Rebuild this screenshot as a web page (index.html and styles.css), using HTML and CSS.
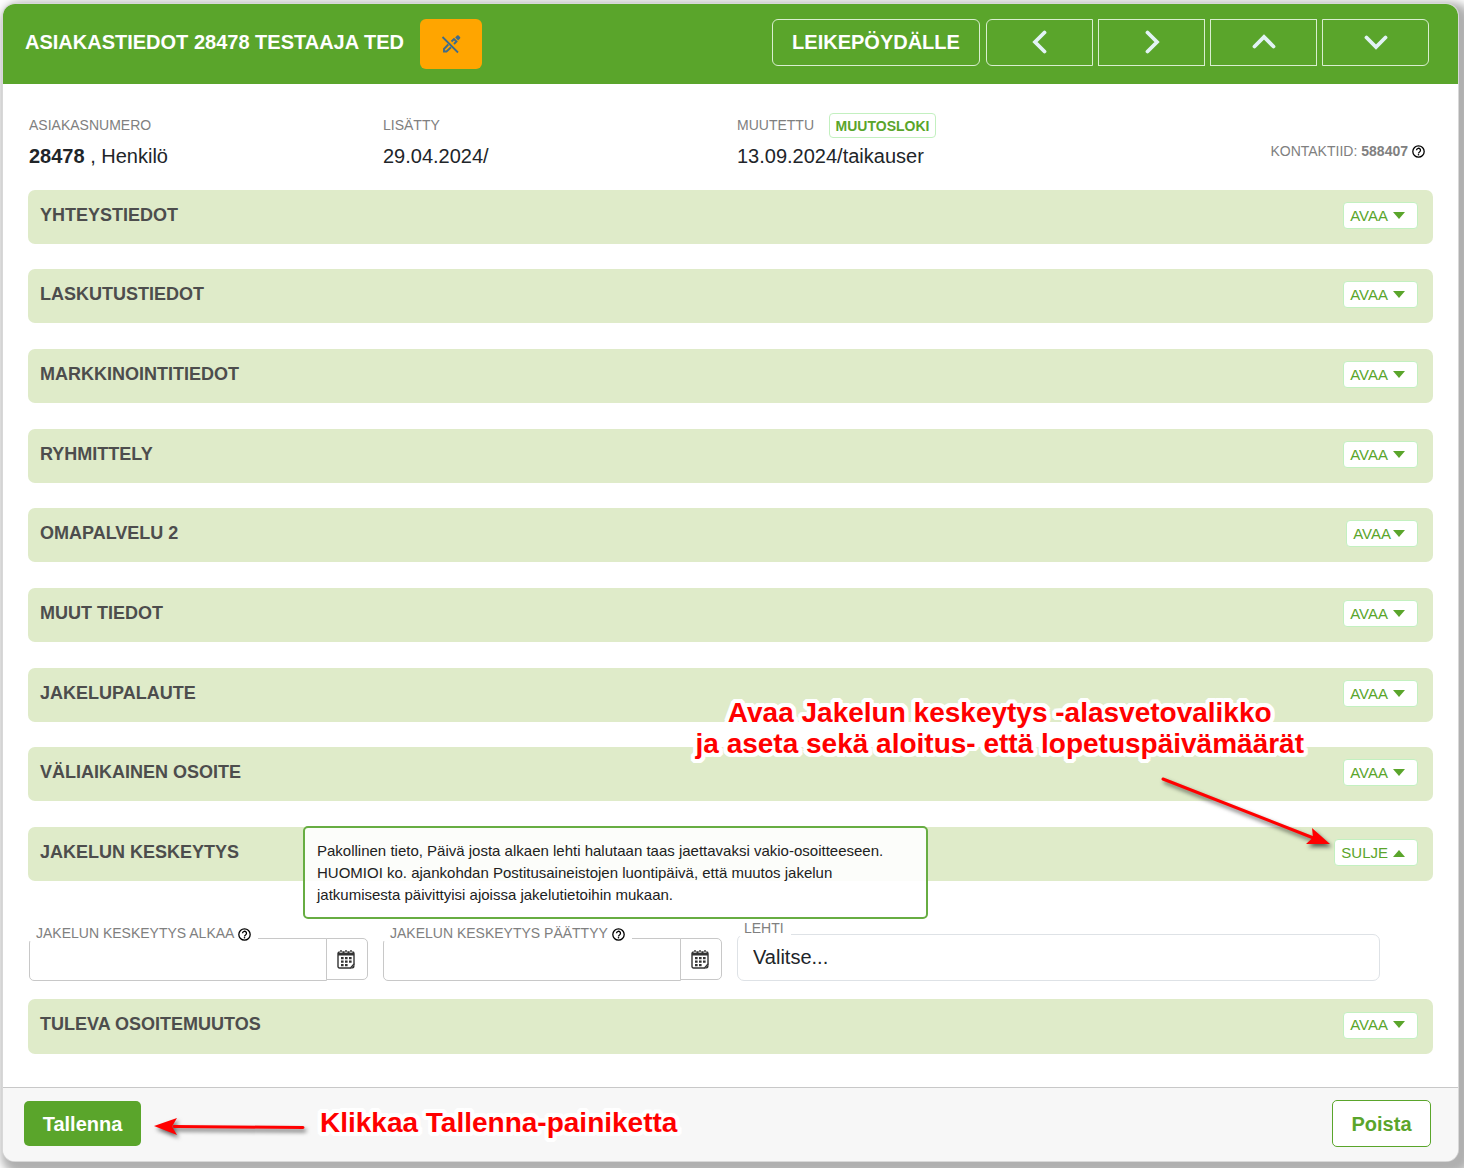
FILE: index.html
```html
<!DOCTYPE html>
<html lang="fi">
<head>
<meta charset="utf-8">
<meta name="viewport" content="width=device-width, initial-scale=1">
<title>Asiakastiedot 28478 Testaaja Ted</title>
<link rel="stylesheet" href="styles.css">
</head>
<body>
<svg class="defs" aria-hidden="true">
  <symbol id="chevron" viewBox="0 0 24 24"><path d="M2.500 16.500 12 7l9.500 9.500" fill="none" stroke="currentColor" stroke-width="3.800" stroke-linecap="round"/></symbol>
  <symbol id="caret" viewBox="0 0 12 8"><path d="M0 0h12L6 7z" fill="currentColor"/></symbol>
  <symbol id="help" viewBox="0 0 24 24"><circle cx="12" cy="12" r="10.500" fill="none" stroke="currentColor" stroke-width="2.400"/><path d="M8.300 9.800a3.700 3.700 0 1 1 5.600 3.100c-1.300.8-1.900 1.300-1.900 2.600" fill="none" stroke="currentColor" stroke-width="2.400"/><circle cx="12" cy="18" r="1.500" fill="currentColor"/></symbol>
  <symbol id="calendar" viewBox="0 0 18 20"><path d="M2.500 3h13A1.500 1.500 0 0 1 17 4.500V15l-3.500 4h-11A1.500 1.500 0 0 1 1 17.500v-13A1.500 1.500 0 0 1 2.500 3z" fill="none" stroke="currentColor" stroke-width="1.400"/><path d="M1 3h16v3.500H1zM17.500 14v3.500a2 2 0 0 1-2 2H12c3 0 4.500-2 5.500-5.500z" fill="currentColor"/><path d="M4 1v3M9 1v3M14 1v3" stroke="#fff" stroke-width="2.600"/><path d="M4 1v2.500M9 1v2.500M14 1v2.500" stroke="currentColor" stroke-width="1.400"/><path d="M8 8h2.600v2.200H8zM12 8h2.600v2.200H12zM4 8h2.600v2.200H4zM4 11.500h2.600v2.200H4zM8 11.500h2.600v2.200H8zM12 11.500h2.600v2.200H12zM4 15h2.600v2.200H4zM8 15h2.600v2.200H8z" fill="currentColor"/></symbol>
</svg>
<main class="dialog">
  <header class="header">
    <h1 class="header-title">ASIAKASTIEDOT 28478 TESTAAJA TED</h1>
    <button class="edit-toggle" type="button" aria-label="Muokkaus pois">
      <svg width="20" height="20" viewBox="0 0 20 20"><path d="M1.500 3 17 18.500" stroke="currentColor" stroke-width="1.800"/><path d="M7.300 10.500 3 15v2.500h2.500L10 13.300M10.500 7.500l2.500-2.500 2.500 2.500-2.500 2.500" fill="none" stroke="currentColor" stroke-width="1.900"/><path d="m14.200 3.500 1.800-2a1.200 1.200 0 0 1 1.600 0L19 2.900a1.200 1.200 0 0 1 0 1.600l-1.900 1.900z" fill="currentColor"/></svg>
    </button>
    <nav class="header-nav">
      <button class="outline-button clip" type="button">LEIKEPÖYDÄLLE</button>
      <div class="pager">
        <button class="outline-button" type="button" aria-label="Edellinen"><svg class="turn-left"><use href="#chevron"/></svg></button>
        <button class="outline-button" type="button" aria-label="Seuraava"><svg class="turn-right"><use href="#chevron"/></svg></button>
        <button class="outline-button" type="button" aria-label="Ylös"><svg><use href="#chevron"/></svg></button>
        <button class="outline-button" type="button" aria-label="Alas"><svg class="turn-down"><use href="#chevron"/></svg></button>
      </div>
    </nav>
  </header>

  <div class="content">
    <dl class="meta">
      <div><dt>ASIAKASNUMERO</dt><dd><b>28478</b> , Henkilö</dd></div>
      <div><dt>LISÄTTY</dt><dd>29.04.2024/</dd></div>
      <div><dt>MUUTETTU <button class="log-button" type="button">MUUTOSLOKI</button></dt><dd>13.09.2024/taikauser</dd></div>
      <div class="contact"><dt>KONTAKTIID: <b>588407</b></dt><dd><svg class="help"><use href="#help"/></svg></dd></div>
    </dl>

    <div class="sections">
      <section class="bar"><h2>YHTEYSTIEDOT</h2><button class="toggle" type="button">AVAA<svg><use href="#caret"/></svg></button></section>
      <section class="bar"><h2>LASKUTUSTIEDOT</h2><button class="toggle" type="button">AVAA<svg><use href="#caret"/></svg></button></section>
      <section class="bar"><h2>MARKKINOINTITIEDOT</h2><button class="toggle" type="button">AVAA<svg><use href="#caret"/></svg></button></section>
      <section class="bar"><h2>RYHMITTELY</h2><button class="toggle" type="button">AVAA<svg><use href="#caret"/></svg></button></section>
      <section class="bar"><h2>OMAPALVELU 2</h2><button class="toggle tight" type="button">AVAA<svg><use href="#caret"/></svg></button></section>
      <section class="bar"><h2>MUUT TIEDOT</h2><button class="toggle" type="button">AVAA<svg><use href="#caret"/></svg></button></section>
      <section class="bar"><h2>JAKELUPALAUTE</h2><button class="toggle" type="button">AVAA<svg><use href="#caret"/></svg></button></section>
      <section class="bar"><h2>VÄLIAIKAINEN OSOITE</h2><button class="toggle" type="button">AVAA<svg><use href="#caret"/></svg></button></section>
      <section class="bar"><h2>JAKELUN KESKEYTYS</h2><button class="toggle" type="button">SULJE<svg class="turn-down"><use href="#caret"/></svg></button>
        <div class="tooltip" role="tooltip">Pakollinen tieto, Päivä josta alkaen lehti halutaan taas jaettavaksi vakio-osoitteeseen. HUOMIOI ko. ajankohdan Postitusaineistojen luontipäivä, että muutos jakelun jatkumisesta päivittyisi ajoissa jakelutietoihin mukaan.</div>
      </section>
    </div>

    <form class="fields">
      <div class="field">
        <label for="start">JAKELUN KESKEYTYS ALKAA <svg class="help"><use href="#help"/></svg></label>
        <div class="date"><input id="start" type="text"><button type="button" aria-label="Valitse alkupäivä"><svg><use href="#calendar"/></svg></button></div>
      </div>
      <div class="field">
        <label for="end">JAKELUN KESKEYTYS PÄÄTTYY <svg class="help"><use href="#help"/></svg></label>
        <div class="date"><input id="end" type="text"><button type="button" aria-label="Valitse loppupäivä"><svg><use href="#calendar"/></svg></button></div>
      </div>
      <div class="field magazine">
        <label for="magazine">LEHTI</label>
        <select id="magazine"><option>Valitse...</option></select>
      </div>
    </form>

    <section class="bar"><h2>TULEVA OSOITEMUUTOS</h2><button class="toggle" type="button">AVAA<svg><use href="#caret"/></svg></button></section>
  </div>

  <footer class="footer">
    <button class="save" type="button">Tallenna</button>
    <button class="delete" type="button">Poista</button>
    <p class="note note-save">Klikkaa Tallenna-painiketta</p>
    <svg class="arrow arrow-save" viewBox="0 0 160 40"><path d="M20 17.500 149 18.500" stroke="red" stroke-width="3" stroke-linecap="round"/><path d="M0 17 23 9 18 17.500 23 26z" fill="red"/></svg>
  </footer>

  <p class="note note-open">Avaa Jakelun keskeytys -alasvetovalikko<br>ja aseta sekä aloitus- että lopetuspäivämäärät</p>
  <svg class="arrow arrow-open" viewBox="0 0 180 80"><path d="M2 2 155 62" stroke="red" stroke-width="3" stroke-linecap="round"/><path d="M169 67 151 51 152 60.500 145 67z" fill="red"/></svg>
</main>
</body>
</html>
```
FILE: styles.css
```css
* { box-sizing: border-box; }

body {
  margin: 0;
  padding: 4px 6px 7px 3px;
  overflow-x: hidden;
  background: #fff;
  font: 20px/24px "Liberation Sans", Arial, sans-serif;
  color: #212529;
}

h1, h2, p, dl, dd { margin: 0; }
button, input, select { font: inherit; }
button { padding: 0; cursor: pointer; }
svg { display: block; flex: none; }
.defs { display: none; }
.turn-left { transform: rotate(-90deg); }
.turn-right { transform: rotate(90deg); }
.turn-down { transform: rotate(180deg); }

.dialog {
  position: relative;
  background: #fff;
  border-radius: 12px;
  box-shadow: 0 0 0 1px #d8d8d8, 6px 6px 10px 8px #b0b0b0;
}

/* Header */
.header {
  display: flex;
  align-items: flex-start;
  gap: 16px;
  min-height: 80px;
  padding: 15px 29px 15px 22px;
  background: #5aa52b;
  border-radius: 12px 12px 0 0;
}
.header-title {
  font-size: 20px;
  line-height: 46px;
  color: #fff;
}
.edit-toggle {
  display: grid;
  place-items: center;
  width: 62px;
  height: 50px;
  border: 0;
  border-radius: 6px;
  background: #ffa500;
  color: #3f6c8a;
}
.header-nav { display: flex; gap: 6px; margin-left: auto; }
.pager { display: flex; gap: 5px; }
.outline-button {
  display: grid;
  place-items: center;
  width: 107px;
  height: 47px;
  padding-bottom: 2px;
  border: 1px solid #d9efd0;
  background: transparent;
  color: #e2f3f5;
}
.outline-button svg { width: 24px; height: 24px; }
.clip { width: 208px; border-radius: 6px; color: #fff; font-weight: bold; }
.pager button:first-child { border-radius: 6px 0 0 6px; }
.pager button:last-child { border-radius: 0 6px 6px 0; }

/* Customer summary */
.content { padding: 28px 25px 33px; }
.meta, .fields {
  display: grid;
  grid-template-columns: repeat(4, 1fr);
  gap: 15px;
  padding: 0 3px 0 1px;
}
.meta { min-height: 78px; }
.meta dt {
  display: flex;
  align-items: center;
  gap: 15px;
  height: 26px;
  font-size: 14px;
  color: #808080;
}
.meta dd { line-height: 36px; }
.log-button {
  width: 107px;
  height: 25px;
  border: 1px solid #c3f0c0;
  border-radius: 4px;
  background: #fff;
  color: #5aa52b;
  font-weight: bold;
}
.meta .contact {
  display: flex;
  justify-content: flex-end;
  align-items: center;
  height: 77px;
  padding-right: 5px;
}
.contact dt { gap: 4px; }
.help { width: 13px; height: 13px; margin: 2px 0 0 4px; color: #000; }

/* Section bars */
.bar {
  position: relative;
  display: flex;
  justify-content: space-between;
  align-items: center;
  min-height: 55px;
  padding: 0 15px 3px 12px;
  border-radius: 7px;
  background: #dfebc9;
}
.sections .bar { min-height: 54px; }
.sections .bar:not(:last-child) { margin-bottom: 26px; }
.sections .bar:nth-child(3n+1) { margin-bottom: 25px; }
.bar h2 { padding-bottom: 2px; font-size: 18px; color: #4d4d4d; }
.toggle {
  display: flex;
  align-items: center;
  gap: 5px;
  height: 27px;
  padding: 0 12px 0 6px;
  border: 1px solid #c3f0c0;
  border-radius: 4px;
  background: #fff;
  color: #5aa52b;
  font-size: 15px;
}
.toggle svg { width: 12px; height: 8px; }
.tight { gap: 2px; }
.tooltip {
  position: absolute;
  z-index: 2;
  top: -1px;
  left: 275px;
  width: 625px;
  padding: 12px 12px 11px;
  border: 2px solid #67ad42;
  border-radius: 5px;
  background: rgba(255, 255, 255, 0.9);
  color: #212121;
  font-size: 15px;
  line-height: 22px;
}

/* Delivery pause fields */
.fields { align-items: end; padding-top: 39px; padding-bottom: 18px; }
.field { display: flex; flex-direction: column; align-items: flex-start; }
.field label {
  position: relative;
  display: flex;
  align-items: center;
  height: 16px;
  margin-bottom: -3px;
  padding: 0 7px;
  background: #fff;
  color: #808080;
  font-size: 14px;
}
.date { display: flex; align-items: flex-start; width: 100%; }
.date input {
  flex: 1;
  min-width: 0;
  height: 43px;
  border: 1px solid #c8c8c8;
  border-radius: 5px 0 0 5px;
}
.date button {
  display: grid;
  place-items: center;
  width: 42px;
  height: 42px;
  padding-right: 2px;
  margin-left: -1px;
  border: 1px solid #c8c8c8;
  border-radius: 0 5px 5px 0;
  background: #fff;
  color: #333;
}
.date svg { width: 18px; height: 20px; }
.magazine { grid-column: span 2; padding-right: 50px; }
.magazine label { margin-bottom: -2px; }
.magazine select {
  width: 100%;
  height: 47px;
  padding: 0 15px 2px;
  appearance: none;
  border: 1px solid #dee2e6;
  border-radius: 7px;
  background: #fff;
  color: #212529;
}

/* Footer */
.footer {
  position: relative;
  display: flex;
  justify-content: space-between;
  align-items: center;
  min-height: 74px;
  padding: 0 27px 2px 21px;
  border-top: 1px solid #c8c8c8;
  border-radius: 0 0 12px 12px;
  background: #f7f7f7;
}
.save, .delete { border-radius: 5px; font-weight: bold; }
.save { width: 117px; height: 45px; border: 0; background: #5aa52b; color: #fff; }
.delete { width: 99px; height: 47px; border: 1px solid #5aa52b; background: #fff; color: #5aa52b; }

/* Instruction overlays */
.note {
  position: absolute;
  z-index: 3;
  color: #f00;
  font-size: 28px;
  font-weight: bold;
  line-height: 31px;
  text-align: center;
  white-space: nowrap;
  text-shadow:
    4px 0 #fff, -4px 0 #fff, 0 4px #fff, 0 -4px #fff,
    3px 3px #fff, -3px 3px #fff, 3px -3px #fff, -3px -3px #fff,
    4px 2px #fff, -4px 2px #fff, 4px -2px #fff, -4px -2px #fff,
    2px 4px #fff, -2px 4px #fff, 2px -4px #fff, -2px -4px #fff,
    2px 0 #fff, -2px 0 #fff, 0 2px #fff, 0 -2px #fff;
}
.note-open { top: 693px; right: 154px; }
.note-save { top: 19px; left: 317px; }
.arrow {
  position: absolute;
  z-index: 3;
  overflow: visible;
  filter: drop-shadow(2px 3px 2px rgba(0, 0, 0, 0.6));
}
.arrow-open { top: 773px; right: 117px; width: 180px; height: 80px; }
.arrow-save { top: 21px; left: 151px; width: 160px; height: 40px; }
```
